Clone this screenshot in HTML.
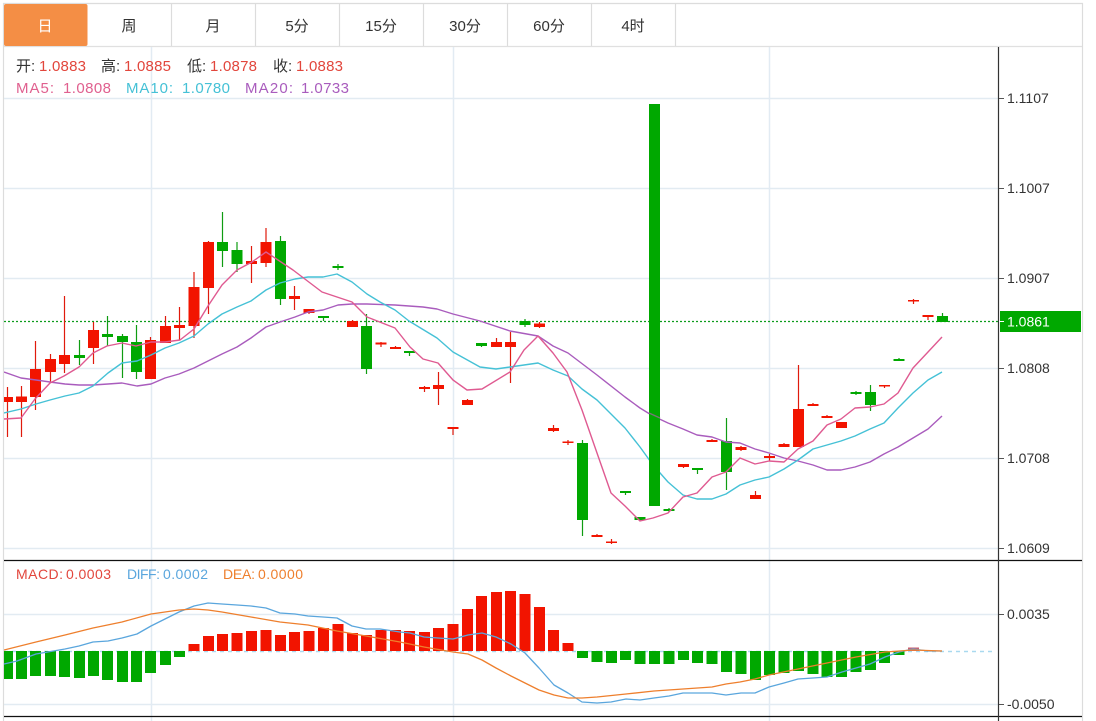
<!DOCTYPE html>
<html><head><meta charset="utf-8"><style>
html,body{margin:0;padding:0;background:#fff;width:1096px;height:721px;overflow:hidden}
svg{display:block;font-family:"Liberation Sans","Noto Sans CJK SC",sans-serif}
</style></head><body>
<svg width="1096" height="721" viewBox="0 0 1096 721" xmlns="http://www.w3.org/2000/svg">
<defs><clipPath id="c"><rect x="4" y="47" width="994" height="674"/></clipPath></defs>
<!-- frame -->
<path d="M3.500 721V3.500H1082.500V721" fill="none" stroke="#dcdcdc" stroke-width="1.200"/>
<path d="M4 46.500H1082" stroke="#e0e0e0" stroke-width="1.200"/>
<path d="M171.500 4V46M255.500 4V46M339.500 4V46M423.500 4V46M507.500 4V46M591.500 4V46M675.500 4V46" stroke="#dcdcdc" stroke-width="1.200"/>
<rect x="4" y="4" width="83.500" height="42" rx="2" fill="#f48e45"/>
<g font-size="15" fill="#333" text-anchor="middle">
<text x="45" y="31" fill="#fff">日</text><text x="129" y="31">周</text><text x="213" y="31">月</text><text x="297" y="31">5分</text><text x="381" y="31">15分</text><text x="465" y="31">30分</text><text x="549" y="31">60分</text><text x="633" y="31">4时</text>
</g>
<!-- grid -->
<path d="M4 98.500H998M4 188.500H998M4 278.500H998M4 368.500H998M4 458.500H998M4 548.500H998M4 614.500H998M4 704.500H998" stroke="#e2ebf2" stroke-width="1.500"/>
<path d="M151.500 47V721M453.500 47V721M769.500 47V721" stroke="#e2ebf3" stroke-width="1.500"/>
<path d="M4 321.500H998" stroke="#0c9c1c" stroke-width="1.300" stroke-dasharray="2 2"/>
<path d="M4 651.500H993" stroke="#a9d9ef" stroke-width="1.500" stroke-dasharray="4 4"/>
<g clip-path="url(#c)">
<!-- red wicks -->
<path fill="none" stroke="#e01a0c" stroke-width="1.200" d="M7.500 387V437M21.500 386V437M35.500 341V410M50.500 354V383M64.500 296V373M93.500 322V364M150.500 337V379M165.500 316V343M179.500 307V340M194 272V338M208.500 241V314M251.500 246V283M266 228V267M294.500 286V310M309 309V314M352.500 320V327M381 342V347M395.500 346V349M424.500 386V392M438.500 372V405M453 427V435M467.500 399V405M496.500 338V347M510.500 332V383M539.500 322V328M553.500 425V432M568 440V445M597 534V537M611.500 539V544M683.500 464V468M712 439V442M741 446V451M755.500 491V499M769.500 454V461M784 443V447M798.500 365V447M813 403V406M827 415V418M841.500 422V428M884.500 385V388M913.500 299V304M928 315V320"/>
<!-- red bodies -->
<path fill="none" stroke="#f21400" stroke-width="11" d="M7.500 397V402M21.500 396.500V402M35.500 369V397M50.500 359V372M64.500 355V364M93.500 330V348M150.500 340V379M165.500 326V343M179.500 325V328M194 287V326M208.500 242V288M251.500 261V264M266 242V263M294.500 296V299M309 309V313M352.500 321V327M381 342.500V344.500M395.500 347V349M424.500 387V389M438.500 385V389M453 427V429M467.500 400V405M496.500 342V347M510.500 342V347M539.500 323.500V327M553.500 428V431M568 441.500V443M597 535V537M611.500 541.500V543M683.500 464V467M712 440V442M741 447V450M755.500 495V499M769.500 456V458M784 444V447M798.500 409V447M813 404V406M827 416V418M841.500 422V428M884.500 385V386.500M913.500 300V301.500M928 315V317"/>
<!-- green wicks -->
<path fill="none" stroke="#0f9c12" stroke-width="1.200" d="M79.500 340V365M107.500 316V346M122.500 334V378M136.500 325V379M222.500 212V267M237 242V272M280.500 236V305M323.500 316V321M338 264V270M366.500 314V374M409.500 351V356M481.500 343V347M525 319V327M582.500 440V536M625.500 491V495M640 517V521M669 508V512M697.500 468V474M726.500 418V490M856 391V395M870.500 385V411M899 358V361M942.500 313V322"/>
<!-- green bodies -->
<path fill="none" stroke="#00a800" stroke-width="11" d="M79.500 355V358M107.500 334V337M122.500 336V342M136.500 342V372M222.500 242V251M237 250V264M280.500 241V299M323.500 316V318M338 266V268M366.500 326V369M409.500 351V353M481.500 343V346M525 321V325M582.500 443V520M625.500 491V493M640 517V520M669 509V511M697.500 468V470M726.500 441V472M856 392V394M870.500 392V405M899 359V361M942.500 316V322"/>
<!-- MA lines -->
<g fill="none" stroke-width="1.400" stroke-linejoin="round">
<path stroke="#a95cbd" d="M4 372L21 378 36 380 50 382 65 384 79 385 93 385 108 384 122 383 137 386 151 384 165 378 179 374 194 368 208 361 222 354 237 347 251 338 266 327 280 322 295 317 308 312 323 310 338 305 352 304 367 304 395 305 423 307 437 309 453 314 480 321 510 331 538 336 553 346 568 353 597 375 625 397 640 408 653 416 668 423 683 429 697 435 712 437 726 442 740 443 755 449 769 453 784 458 798 461 813 465 827 470 841 470 855 467 870 462 884 454 898 447 913 438 928 429 942 416"/>
<path stroke="#45c1d6" d="M4 413L21 409 36 404 50 400 65 396 79 393 93 386 108 373 122 363 137 361 151 355 165 348 179 343 194 336 208 324 222 314 237 307 251 301 266 290 280 283 295 279 308 277 323 277 337 274 352 282 367 294 380 302 395 310 409 321 437 338 453 352 480 367 496 369 510 367 538 363 553 370 568 376 582 389 597 400 625 428 640 447 653 465 668 482 683 495 697 499 712 499 726 494 740 485 755 480 769 477 784 469 798 460 813 449 827 445 841 441 855 436 870 429 884 423 898 408 913 393 928 380 942 372"/>
<path stroke="#df5a91" d="M4 419L21 418 35 399 50 383 64 376 79 367 93 353 107 346 122 343 136 346 151 342 165 342 180 340 194 329 208 306 222 285 237 270 252 262 266 252 293 270 322 292 352 302 367 317 395 328 410 347 423 359 438 363 453 380 467 390 482 389 510 372 524 350 538 336 553 353 567 372 582 410 597 453 611 493 625 506 640 521 653 518 668 513 683 497 697 493 712 477 726 472 740 458 755 464 769 461 784 462 798 449 813 441 827 425 841 419 855 408 870 407 884 404 898 393 913 368 928 352 942 337"/>
</g>
<!-- big candle on top -->
<rect x="649" y="104" width="11" height="402" fill="#00a800"/>
<path d="M649 413L660 418" stroke="#777" stroke-width="1.300" fill="none"/>
<!-- MACD bars -->
<path fill="none" stroke="#00a800" stroke-width="11" d="M7.500 651V679M21.500 651V679M35.500 651V676M50.500 651V676M64.500 651V677M79.500 651V678M93.500 651V676M107.500 651V680M122.500 651V682M136.500 651V682M150.500 651V673M165.500 651V665M179.500 651V657M582.500 651V658M597 651V662M611.500 651V663M625.500 651V660M640 651V664M654.500 651V664M669 651V664M683.500 651V660M697.500 651V663M712 651V664M726.500 651V672M741 651V674M755.500 651V680M769.500 651V675M784 651V673M798.500 651V671M813 651V674M827 651V677M841.500 651V677M856 651V672M870.500 651V670M884.500 651V663M899 651V655"/>
<path fill="none" stroke="#f21400" stroke-width="11" d="M194 651V644M208.500 651V636M222.500 651V634M237 651V633M251.500 651V631M266 651V630M280.500 651V635M294.500 651V632M309 651V631M323.500 651V628M338 651V624M352.500 651V633M366.500 651V635M381 651V630M395.500 651V630M409.500 651V631M424.500 651V632M438.500 651V628M453 651V624M467.500 651V609M481.500 651V596M496.500 651V592M510.500 651V591M525 651V594M539.500 651V607M553.500 651V630M568 651V643"/>
<path fill="none" stroke="#c9606f" stroke-width="11" d="M913.500 651V647.500"/>
<g fill="none" stroke-width="1.300" stroke-linejoin="round">
<path stroke="#5aa6dd" d="M4 664L17 661 36 654 65 649 79 646 93 642 108 641 122 638 137 634 151 626 165 619 179 612 194 606 208 603 222 604 237 605 251 606 266 608 280 613 295 614 308 616 323 617 337 618 352 626 366 629 380 629 400 632 410 633 424 637 438 638 453 639 468 635 482 633 496 637 511 644 525 653 539 668 554 685 568 693 582 702 597 703 611 702 626 699 640 700 654 698 669 696 683 693 698 693 712 693 726 695 741 693 755 693 769 687 784 683 798 679 813 678 827 677 842 672 856 668 870 664 885 657 899 652 913 649 928 651 942 651"/>
<path stroke="#ee7f2d" d="M4 650L36 642 65 635 93 628 122 622 151 614 165 612 179 610 194 609 208 610 222 612 251 617 280 622 308 625 337 631 366 636 400 642 424 647 453 652 468 654 482 660 496 668 511 676 525 683 539 690 554 695 568 698 582 698 597 697 626 694 654 691 683 689 712 687 726 684 740 682 755 679 769 675 798 669 827 663 856 657 885 652 913 650 942 651"/>
</g>
</g>
<!-- axes -->
<path d="M4 560.500H1082M4 716.500H1082" stroke="#111" stroke-width="1.200"/>
<path d="M998.500 47V721" stroke="#333" stroke-width="1.200"/>
<path d="M999 98.500H1004M999 188.500H1004M999 278.500H1004M999 368.500H1004M999 458.500H1004M999 548.500H1004M999 614.500H1004M999 704.500H1004" stroke="#555"/>
<rect x="1000" y="311" width="81" height="21" fill="#00a800"/>
<path d="M999 321.500H1004" stroke="#fff"/>
<g font-size="14" fill="#333">
<text x="1007" y="103">1.1107</text><text x="1007" y="193">1.1007</text><text x="1007" y="283">1.0907</text><text x="1007" y="373">1.0808</text><text x="1007" y="463">1.0708</text><text x="1007" y="553">1.0609</text>
<text x="1007" y="326.500" fill="#fff">1.0861</text>
<text x="1007" y="619">0.0035</text><text x="1007" y="709">-0.0050</text>
</g>
<!-- legends -->
<g font-size="15">
<g fill="#333"><text x="16" y="71">开:</text><text x="101" y="71">高:</text><text x="187" y="71">低:</text><text x="273" y="71">收:</text></g>
<g fill="#e2463c"><text x="39" y="71" textLength="47">1.0883</text><text x="124" y="71" textLength="47">1.0885</text><text x="210" y="71" textLength="47">1.0878</text><text x="296" y="71" textLength="47">1.0883</text></g>
<g fill="#e0608f"><text x="16" y="93" textLength="38">MA5:</text><text x="63" y="93" textLength="48">1.0808</text></g>
<g fill="#45c1d6"><text x="126" y="93" textLength="47">MA10:</text><text x="182" y="93" textLength="48">1.0780</text></g>
<g fill="#a95cbd"><text x="245" y="93" textLength="48">MA20:</text><text x="301" y="93" textLength="48">1.0733</text></g>
</g>
<g font-size="14">
<g fill="#e2463c"><text x="16" y="579" textLength="47">MACD:</text><text x="66" y="579" textLength="45">0.0003</text></g>
<g fill="#5aa6dd"><text x="127" y="579" textLength="33">DIFF:</text><text x="163" y="579" textLength="45">0.0002</text></g>
<g fill="#ee7f2d"><text x="223" y="579" textLength="32">DEA:</text><text x="258" y="579" textLength="45">0.0000</text></g>
</g>
</svg>
</body></html>
